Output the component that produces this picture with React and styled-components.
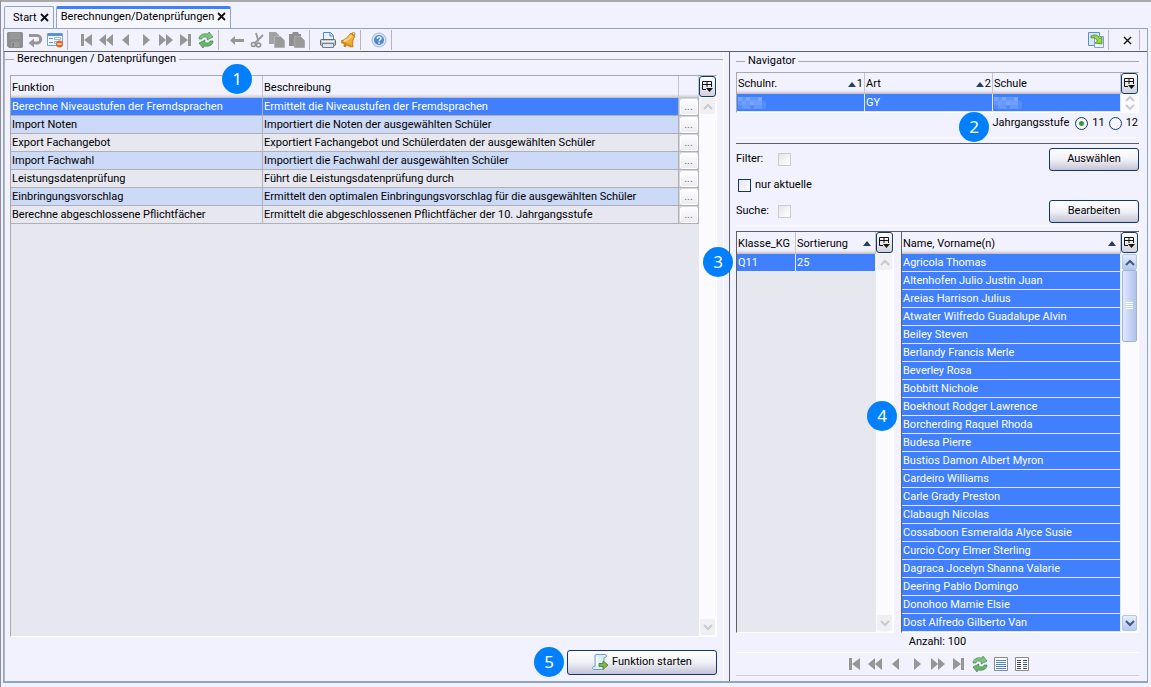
import React, { useState } from "react";
import styled, { createGlobalStyle } from "styled-components";

const functions = [
  ["Berechne Niveaustufen der Fremdsprachen", "Ermittelt die Niveaustufen der Fremdsprachen"],
  ["Import Noten", "Importiert die Noten der ausgewählten Schüler"],
  ["Export Fachangebot", "Exportiert Fachangebot und Schülerdaten der ausgewählten Schüler"],
  ["Import Fachwahl", "Importiert die Fachwahl der ausgewählten Schüler"],
  ["Leistungsdatenprüfung", "Führt die Leistungsdatenprüfung durch"],
  ["Einbringungsvorschlag", "Ermittelt den optimalen Einbringungsvorschlag für die ausgewählten Schüler"],
  ["Berechne abgeschlossene Pflichtfächer", "Ermittelt die abgeschlossenen Pflichtfächer der 10. Jahrgangsstufe"],
];

const students = [
  "Agricola Thomas",
  "Altenhofen Julio Justin Juan",
  "Areias Harrison Julius",
  "Atwater Wilfredo Guadalupe Alvin",
  "Beiley Steven",
  "Berlandy Francis Merle",
  "Beverley Rosa",
  "Bobbitt Nichole",
  "Boekhout Rodger Lawrence",
  "Borcherding Raquel Rhoda",
  "Budesa Pierre",
  "Bustios Damon Albert Myron",
  "Cardeiro Williams",
  "Carle Grady Preston",
  "Clabaugh Nicolas",
  "Cossaboon Esmeralda Alyce Susie",
  "Curcio Cory Elmer Sterling",
  "Dagraca Jocelyn Shanna Valarie",
  "Deering Pablo Domingo",
  "Donohoo Mamie Elsie",
  "Dost Alfredo Gilberto Van",
];

/* icons */

const navPaths = {
  Erster: "M3 2h3v12H3zM14 2v12L6 8z",
  Zurückblättern: "M8 2v12L1 8zM15 2v12L8 8z",
  Voriger: "M11 2v12L4 8z",
  Nächster: "M5 2v12l7-6z",
  Vorblättern: "M1 2v12l7-6zM8 2v12l7-6z",
  Letzter: "M2 2v12l8-6zM10 2h3v12h-3z",
};

const Icon = ({ children, size = 16 }) => (
  <svg width={size} height={size} viewBox="0 0 16 16" aria-hidden="true">
    {children}
  </svg>
);

const NavIcon = ({ name }) => (
  <Icon>
    <path d={navPaths[name]} fill="#969696" />
  </Icon>
);

const SaveIcon = () => (
  <Icon>
    <path d="M1 0h14l1 1v14l-1 1H2l-2-2V1z" fill="#8f8f8f" />
    <path d="M3 1h10v6H3z" fill="#9c9c9c" />
    <path d="M3 3h10M3 5h10" stroke="#949494" />
    <path d="M4 10h8v5H4z" fill="#9c9c9c" />
    <path d="M5 11h2v4H5z" fill="#858585" />
  </Icon>
);

const UndoIcon = () => (
  <Icon>
    <path d="M2 3.500h8a3.500 3.500 0 0 1 0 7.500H6" fill="none" stroke="#969696" strokeWidth="3" />
    <path d="M7 6.500v9L1.500 11z" fill="#969696" />
  </Icon>
);

const FormIcon = () => (
  <Icon>
    <path d="M.5 1.500h15v12H.5z" fill="#f4f8fe" stroke="#7ba0d3" />
    <path d="M1 1h14v3H1z" fill="#5e92d8" />
    <path d="M2 6.500h4M2 10.500h4" stroke="#6a9be0" />
    <path d="M7.500 5.500h6v2h-6zM7.500 9.500h3v2h-3z" fill="#fff" stroke="#9bb4d6" />
    <circle cx="12.500" cy="12" r="3.500" fill="#e8661b" />
    <path d="M10.500 12h4" stroke="#fff" strokeWidth="1.500" />
  </Icon>
);

const RefreshIcon = () => (
  <Icon>
    <path d="M1 7c0-4 4-6 9-5l1-2 4 5-6 3 .5-2.500C6 4.500 4 5 4 7z" fill="#7fc281" stroke="#3f8f48" strokeWidth=".7" />
    <path d="M15 9c0 4-4 6-9 5l-1 2-4-5 6-3-.5 2.500C10 11.500 12 11 12 9z" fill="#6ab56e" stroke="#3a8643" strokeWidth=".7" />
  </Icon>
);

const BackIcon = () => (
  <Icon>
    <path d="M6 4v3h9v3H6v3L1 8.500z" fill="#969696" />
  </Icon>
);

const CutIcon = () => (
  <Icon>
    <path d="M7 1l2.500 8.500M14 3L6 11" stroke="#999" strokeWidth="1.800" />
    <circle cx="4.500" cy="12.500" r="2" fill="none" stroke="#8f8f8f" strokeWidth="1.600" />
    <circle cx="9.500" cy="13" r="2" fill="none" stroke="#8f8f8f" strokeWidth="1.600" />
  </Icon>
);

const CopyIcon = () => (
  <Icon>
    <path d="M0 0h7l3 3v9H0z" fill="#a3a3a3" />
    <path d="M5.500 4.500h6l4 4v7h-10z" fill="#999" stroke="#b4b4b4" />
  </Icon>
);

const PasteIcon = () => (
  <Icon>
    <path d="M0 2h3l1-2h5l1 2h2v12H0z" fill="#8f8f8f" />
    <path d="M5.500 4.500h6l4 4v7h-10z" fill="#999" stroke="#aaa" />
  </Icon>
);

const PrintIcon = () => (
  <Icon>
    <path d="M3.500 8V.5h7l3 3V8z" fill="#e6f1fd" stroke="#4f87c9" />
    <path d="M10 1v3h3" fill="none" stroke="#4f87c9" />
    <rect x=".5" y="7.500" width="15" height="6" rx="1" fill="#c9c9cb" stroke="#66676b" />
    <path d="M2.500 11.500h11v4h-11z" fill="#dbeaf9" stroke="#6f7f93" />
    <path d="M2 9.500h12" stroke="#f4f4f4" />
  </Icon>
);

const BellIcon = () => (
  <Icon>
    <path d="M1 9C5 8 8 5 11 1l4 3c-2 3-3 6-2 11z" fill="#f2ad32" stroke="#c67c14" />
    <path d="M4 9c4-1 6-3 8-6" fill="none" stroke="#fbd98c" strokeWidth="2" />
    <path d="M1 9l12 6-2 .5L1 11z" fill="#d48a1c" />
    <circle cx="13.500" cy="2" r="1.500" fill="none" stroke="#c67c14" />
    <circle cx="5" cy="13.500" r="1.500" fill="#c67c14" />
  </Icon>
);

const HelpIcon = () => (
  <Icon>
    <circle cx="8" cy="8" r="7" fill="#d9e6f5" stroke="#9db9dc" />
    <circle cx="8" cy="8" r="5" fill="#5288c8" />
    <path d="M6.200 6.800c0-2.600 3.800-2.500 3.800-.3 0 1.400-1.900 1.200-1.900 2.800M8.100 10.300v1.400" fill="none" stroke="#fff" strokeWidth="1.400" />
  </Icon>
);

const ExportIcon = () => (
  <Icon>
    <path d="M.5.5h11v13H.5z" fill="#d5e9fb" stroke="#5d8fc7" />
    <path d="M6.500 4.500h9v11h-9z" fill="#f1f7fe" stroke="#7fa3cf" />
    <path d="M3 4c4-2 7-1 8.500 2.500L14 5v7l-7-1 2.500-2C8 6.500 6 5 3 6z" fill="#9bd63f" stroke="#3f8423" strokeWidth=".8" />
  </Icon>
);

const ScriptIcon = () => (
  <Icon>
    <path d="M4 .5h9c2 0 2 3 0 3h-1v9c0 2-1 3-3 3H2c-2 0-2-3 0-3h1V2c0-1 .4-1.500 1-1.500z" fill="#dcedfb" stroke="#6f9dcb" />
    <path d="M5 3v9" stroke="#fff" strokeWidth="2" />
    <path d="M7 9.500h4V7l5 4-5 4.500v-3H7z" fill="#7cb842" stroke="#3f7d22" strokeWidth=".8" />
  </Icon>
);

const ListIcon = ({ split }) => (
  <Icon>
    <path d="M1.500 1.500h13v13h-13z" fill="#fff" stroke="#8b8b8b" />
    <path d="M3 4.500h10M3 6.500h10M3 8.500h10M3 10.500h10M3 12.500h10" stroke="#4b87cf" />
    {split && <path d="M3 4.500h4M3 6.500h4M3 8.500h4M3 10.500h4M3 12.500h4M9 4.500h4M9 8.500h4M9 12.500h4" stroke="#444" />}
    {split && <path d="M8 2v12" stroke="#fff" strokeWidth="2" />}
  </Icon>
);

const ColumnsIcon = () => (
  <svg width="11" height="12" viewBox="0 0 11 12" aria-hidden="true">
    <path d="M4 8.500H.5v-8h9V6M.5 3.500h9M5 0v6" fill="none" stroke="#111" />
    <path d="M4 7h7l-3.500 4z" fill="#111" />
  </svg>
);

const Chevron = ({ down, off }) => (
  <svg width="10" height="7" viewBox="0 0 10 7" aria-hidden="true">
    <path d={down ? "M1 1l4 4 4-4" : "M1 6l4-4 4 4"} fill="none" stroke={off ? "#c9c9d0" : "#43597b"} strokeWidth="2" />
  </svg>
);

const SortArrow = () => (
  <svg width="8" height="5" viewBox="0 0 8 5" aria-hidden="true">
    <path d="M0 5l4-5 4 5z" fill="#24405f" />
  </svg>
);

const CloseIcon = ({ thin }) => (
  <svg width="9" height="9" viewBox="0 0 9 9" aria-hidden="true">
    <path d="M1 1l7 7M8 1L1 8" stroke="#111" strokeWidth={thin ? 1.4 : 1.8} />
  </svg>
);

// anonymised value, drawn as a small mosaic
const Mosaic = () => (
  <svg width="28" height="12" viewBox="0 0 28 12" role="img" aria-label="anonymisiert">
    <path d="M0 0h24v12H0z" fill="#6398ff" />
    <path d="M0 0h4v4H0zM12 4h4v4h-4zM20 0h4v4h-4zM8 0h4v4H8z" fill="#79a7ff" />
    <path d="M4 4h4v4H4zM16 4h8v4h-8z" fill="#6fa0ff" />
    <path d="M0 8h4v4H0zM24 4h4v8h-4zM12 8h4v4h-4z" fill="#528cff" />
  </svg>
);

/* building blocks */

const ScrollArea = ({ disabled, thumb, label }) => (
  <ScrollTrack>
    <ScrollButton type="button" aria-label={`${label} nach oben`} disabled={disabled}>
      <Chevron off={disabled} />
    </ScrollButton>
    {thumb && <ScrollThumb />}
    <ScrollSpace />
    <ScrollButton type="button" aria-label={`${label} nach unten`} disabled={disabled}>
      <Chevron down off={disabled} />
    </ScrollButton>
  </ScrollTrack>
);

const ColumnsButton = () => (
  <CornerButton type="button" aria-label="Spalten auswählen">
    <ColumnsIcon />
  </CornerButton>
);

const NavButtons = () =>
  Object.keys(navPaths).map((name) => (
    <IconButton key={name} type="button" aria-label={name}>
      <NavIcon name={name} />
    </IconButton>
  ));

const App = () => {
  const [grade, setGrade] = useState("11");

  return (
    <>
      <GlobalStyle />
      <Window>
        <Tabs>
          <Tab>
            <TabLink href="#start">Start</TabLink>
            <CloseButton type="button" aria-label="Start schließen">
              <CloseIcon />
            </CloseButton>
          </Tab>
          <Tab $active>
            <TabLink href="#berechnungen">Berechnungen/Datenprüfungen</TabLink>
            <CloseButton type="button" aria-label="Berechnungen schließen">
              <CloseIcon />
            </CloseButton>
          </Tab>
        </Tabs>

        <Page>
          <Toolbar>
            <ToolGroup $first>
              <IconButton type="button" aria-label="Speichern"><SaveIcon /></IconButton>
              <IconButton type="button" aria-label="Rückgängig"><UndoIcon /></IconButton>
              <IconButton type="button" aria-label="Formular"><FormIcon /></IconButton>
            </ToolGroup>
            <ToolGroup>
              <NavButtons />
              <IconButton type="button" aria-label="Aktualisieren"><RefreshIcon /></IconButton>
            </ToolGroup>
            <ToolGroup>
              <IconButton type="button" aria-label="Zurück"><BackIcon /></IconButton>
              <IconButton type="button" aria-label="Ausschneiden"><CutIcon /></IconButton>
              <IconButton type="button" aria-label="Kopieren"><CopyIcon /></IconButton>
              <IconButton type="button" aria-label="Einfügen"><PasteIcon /></IconButton>
            </ToolGroup>
            <ToolGroup>
              <IconButton type="button" aria-label="Drucken"><PrintIcon /></IconButton>
              <IconButton type="button" aria-label="Erinnerung"><BellIcon /></IconButton>
            </ToolGroup>
            <ToolGroup>
              <IconButton type="button" aria-label="Hilfe"><HelpIcon /></IconButton>
            </ToolGroup>
            <ToolEnd>
              <ToolGroup $first>
                <IconButton type="button" aria-label="Exportieren"><ExportIcon /></IconButton>
              </ToolGroup>
              <ToolGroup>
                <IconButton type="button" aria-label="Schließen"><CloseIcon thin /></IconButton>
              </ToolGroup>
            </ToolEnd>
          </Toolbar>

          <Columns>
            <Main>
              <MainLegend>Berechnungen / Datenprüfungen</MainLegend>
              <MainTable>
                <Badge $x={211} $y={-12}>1</Badge>
                <TableSide>
                  <Table $head={22}>
                    <colgroup>
                      <col width="252" />
                      <col />
                      <col width="20" />
                    </colgroup>
                    <thead>
                      <tr>
                        <Th>Funktion</Th>
                        <Th>Beschreibung</Th>
                        <Th aria-label="Aktion" />
                      </tr>
                    </thead>
                    <tbody>
                      {functions.map(([name, text], i) => (
                        <Row key={name} $selected={i === 0} $striped={i % 2 === 1}>
                          <Td>{name}</Td>
                          <Td>{text}</Td>
                          <ButtonCell>
                            <MoreButton type="button" aria-label={`${name} öffnen`}>...</MoreButton>
                          </ButtonCell>
                        </Row>
                      ))}
                    </tbody>
                  </Table>
                </TableSide>
                <ScrollSide>
                  <ColumnsButton />
                  <ScrollArea disabled label="Funktionen" />
                </ScrollSide>
              </MainTable>
              <Footer>
                <Badge $inline>5</Badge>
                <Button type="button" $large>
                  <ScriptIcon />
                  Funktion starten
                </Button>
              </Footer>
            </Main>

            <Navigator>
              <Legend>Navigator</Legend>
              <SchoolTable>
                <TableSide>
                  <Table $head={21}>
                    <colgroup>
                      <col width="128" />
                      <col width="128" />
                      <col />
                    </colgroup>
                    <thead>
                      <tr>
                        <Th><Head>Schulnr.<Sort><SortArrow />1</Sort></Head></Th>
                        <Th><Head>Art<Sort><SortArrow />2</Sort></Head></Th>
                        <Th>Schule</Th>
                      </tr>
                    </thead>
                    <tbody>
                      <Row $selected $light>
                        <Td><Mosaic /></Td>
                        <Td>GY</Td>
                        <Td><Mosaic /></Td>
                      </Row>
                    </tbody>
                  </Table>
                </TableSide>
                <ScrollSide>
                  <ColumnsButton />
                  <Spinner>
                    <Chevron off />
                    <Chevron down off />
                  </Spinner>
                </ScrollSide>
              </SchoolTable>

              <GradeRow role="radiogroup" aria-label="Jahrgangsstufe">
                <Badge $x={223} $y={-1}>2</Badge>
                <GradeLabel>Jahrgangsstufe</GradeLabel>
                {["11", "12"].map((g) => (
                  <RadioLabel key={g}>
                    <Radio name="grade" checked={grade === g} onChange={() => setGrade(g)} />
                    {g}
                  </RadioLabel>
                ))}
              </GradeRow>

              <Filters>
                <FilterRow>
                  <FilterLabel htmlFor="filter">Filter:</FilterLabel>
                  <Check id="filter" disabled />
                  <Button type="button">Auswählen</Button>
                </FilterRow>
                <FilterRow $indent>
                  <Check id="current" />
                  <label htmlFor="current">nur aktuelle</label>
                </FilterRow>
                <FilterRow>
                  <FilterLabel htmlFor="search">Suche:</FilterLabel>
                  <Check id="search" disabled />
                  <Button type="button">Bearbeiten</Button>
                </FilterRow>
              </Filters>

              <Lists>
                <ClassTable>
                  <Badge $x={-34} $y={15}>3</Badge>
                  <TableSide>
                    <Table $head={22}>
                      <colgroup>
                        <col width="59" />
                        <col />
                      </colgroup>
                      <thead>
                        <tr>
                          <Th>Klasse_KG</Th>
                          <Th><Head>Sortierung<Sort $pad><SortArrow /></Sort></Head></Th>
                        </tr>
                      </thead>
                      <tbody>
                        <Row $selected $light>
                          <Td>Q11</Td>
                          <Td>25</Td>
                        </Row>
                      </tbody>
                    </Table>
                  </TableSide>
                  <ScrollSide>
                    <ColumnsButton />
                    <ScrollArea disabled label="Klassen" />
                  </ScrollSide>
                </ClassTable>
                <NameTable>
                  <Badge $x={-35} $y={169}>4</Badge>
                  <TableSide>
                    <Table $head={22}>
                      <thead>
                        <tr>
                          <Th><Head>Name, Vorname(n)<Sort $pad><SortArrow /></Sort></Head></Th>
                        </tr>
                      </thead>
                      <tbody>
                        {students.map((s) => (
                          <Row key={s} $selected $light>
                            <Td>{s}</Td>
                          </Row>
                        ))}
                      </tbody>
                    </Table>
                  </TableSide>
                  <ScrollSide>
                    <ColumnsButton />
                    <ScrollArea thumb label="Schüler" />
                  </ScrollSide>
                </NameTable>
              </Lists>

              <Count>Anzahl: 100</Count>
              <Pager>
                <NavButtons />
                <IconButton type="button" aria-label="Neu laden"><RefreshIcon /></IconButton>
                <IconButton type="button" aria-label="Liste"><ListIcon /></IconButton>
                <IconButton type="button" aria-label="Detailliste"><ListIcon split /></IconButton>
              </Pager>
            </Navigator>
          </Columns>
        </Page>
      </Window>
    </>
  );
};

const GlobalStyle = createGlobalStyle`
  * {
    box-sizing: border-box;
  }
  body {
    margin: 0;
    background: #f2f2ff;
    color: #000;
    font: 11px/16px Roboto, sans-serif;
  }
  button, input {
    font: inherit;
    color: inherit;
    margin: 0;
  }
  svg {
    display: block;
    flex: none;
  }
`;

const Window = styled.div`
  display: flex;
  flex-direction: column;
  min-height: 100vh;
  padding: 4px 3px 4px 2px;
  border-top: 2px solid #a9a9ac;
  border-left: 1px solid #8e8e96;
  border-bottom: 1px solid #7a9cc4;
`;

const Tabs = styled.nav`
  display: flex;
  gap: 2px;
  padding-left: 1px;
`;

const Tab = styled.div`
  display: flex;
  align-items: center;
  gap: 3px;
  height: 22px;
  padding: ${(p) => (p.$active ? "0 4px 3px" : "1px 4px 0 8px")};
  border: 1px solid #8fa5c0;
  border-bottom: 0;
  border-top: ${(p) => (p.$active ? "3px solid #3f7ffb" : "1px solid #8fa5c0")};
  border-radius: 2px 2px 0 0;
  background: ${(p) => (p.$active ? "#f7f7ff" : "#f2f2ff")};
`;

const TabLink = styled.a`
  color: inherit;
  text-decoration: none;
`;

const CloseButton = styled.button`
  padding: 0 0 2px;
  border: 0;
  background: none;
`;

const Page = styled.div`
  display: flex;
  flex: 1;
  flex-direction: column;
  border: 1px solid #8fa5c0;
  border-bottom: 2px solid #8fa5c0;
`;

const Toolbar = styled.div`
  display: flex;
  height: 23px;
  border-bottom: 1px solid #5f5f66;
`;

const ToolGroup = styled.div`
  display: flex;
  align-items: center;
  gap: 4px;
  margin: 1px 0;
  padding: ${(p) => (p.$first ? "0 4px 0 3px" : "0 4px 0 10px")};
  border-right: 1px solid #b5b5b8;
`;

const ToolEnd = styled.div`
  display: flex;
  margin-left: auto;
  padding-right: 7px;
`;

const IconButton = styled.button`
  display: grid;
  place-items: center;
  width: 16px;
  height: 16px;
  padding: 0;
  border: 0;
  background: none;
`;

const Columns = styled.div`
  display: grid;
  flex: 1;
  grid-template-columns: minmax(0, 1fr) 418px;
  gap: 5px;
`;

const Main = styled.section`
  display: flex;
  flex-direction: column;
  padding: 0 6px 4px 5px;
  border-left: 1px solid #b5b5b8;
  border-right: 1px solid #fff;
`;

const Legend = styled.h2`
  display: flex;
  align-items: center;
  gap: 3px;
  margin: 0;
  font-size: 11px;
  font-weight: normal;
  line-height: 14px;
  &::before,
  &::after {
    content: "";
    height: 1px;
    background: #a9a9ac;
  }
  &::before {
    width: 9px;
  }
  &::after {
    flex: 1;
  }
`;

const MainLegend = styled(Legend)`
  margin: 0 -6px 0 -5px;
`;

const Frame = styled.div`
  position: relative;
  display: flex;
  border: 1px solid #a9a9ac;
  border-right-color: #fff;
  border-bottom-color: #fff;
`;

const MainTable = styled(Frame)`
  flex: 1;
  margin-top: 9px;
`;

const SchoolTable = styled(Frame)`
  margin-top: 4px;
`;

const ClassTable = styled(Frame)`
  width: 158px;
  border-left-color: #5f5f66;
  border-top: 0;
`;

const NameTable = styled(Frame)`
  flex: 1;
  border-left-color: #5f5f66;
  border-top: 0;
`;

const TableSide = styled.div`
  flex: 1;
  min-width: 0;
  background: #e7e7ef;
`;

const ScrollSide = styled.div`
  display: flex;
  flex-direction: column;
  width: 17px;
  background: #fbfbff;
`;

const Table = styled.table`
  width: 100%;
  table-layout: fixed;
  border-collapse: separate;
  border-spacing: 0;
  th {
    height: ${(p) => p.$head}px;
  }
`;

const Th = styled.th`
  padding: 2px 1px 0;
  overflow: hidden;
  border-right: 1px solid #c4c4ca;
  border-bottom: 1px solid #c0c0c8;
  background: linear-gradient(#f2f2ff 85%, #d2d2dc);
  font-weight: normal;
  text-align: left;
  white-space: nowrap;
`;

const Head = styled.span`
  display: flex;
  justify-content: space-between;
`;

const Sort = styled.span`
  display: flex;
  align-items: center;
  gap: 1px;
  padding-right: ${(p) => (p.$pad ? 3 : 0)}px;
`;

const Td = styled.td`
  height: 18px;
  padding: 1px 1px 0;
  overflow: hidden;
  line-height: 16px;
  white-space: nowrap;
`;

const Row = styled.tr`
  background: ${(p) => (p.$selected ? "#4080ff" : p.$striped ? "#ccdaf7" : "#e7e7ef")};
  color: ${(p) => (p.$selected ? "#fff" : "#000")};
  td {
    border-right: 1px solid ${(p) => (p.$light ? "#e7e7ef" : "#b0b0b6")};
    border-bottom: 1px solid ${(p) => (p.$light ? "#e7e7ef" : "#b0b0b6")};
  }
`;

const ButtonCell = styled(Td)`
  padding: 0;
  background: #d4d4dc;
`;

const MoreButton = styled.button`
  display: block;
  width: 18px;
  height: 16px;
  margin: 0 auto;
  padding: 0;
  border: 1px solid #fff;
  border-radius: 2px;
  background: linear-gradient(#fdfdff, #ececf2);
  color: #6d7a6d;
  font-size: 11px;
  line-height: 13px;
`;

const CornerButton = styled.button`
  display: grid;
  place-items: center;
  width: 17px;
  height: 21px;
  padding: 0;
  border: 1px solid #12376d;
  border-radius: 3px;
  background: linear-gradient(#fff, #d2d2de);
`;

const ScrollTrack = styled.div`
  display: flex;
  flex: 1;
  flex-direction: column;
  align-items: center;
  padding: 1px 0;
`;

const ScrollButton = styled.button`
  display: grid;
  place-items: center;
  width: 15px;
  height: 16px;
  padding: 0;
  border: ${(p) => (p.disabled ? "0" : "1px solid #b4c4e4")};
  border-radius: 2px;
  background: ${(p) => (p.disabled ? "#f0f0f4" : "linear-gradient(#e6eeff, #b4c8f0)")};
`;

const ScrollThumb = styled.div`
  width: 15px;
  height: 72px;
  border: 1px solid #9fb2d8;
  border-radius: 2px;
  background:
    repeating-linear-gradient(#fff 0 1px, transparent 1px 2px) center / 7px 8px no-repeat,
    linear-gradient(90deg, #dfe8ff, #b0c2ec);
`;

const ScrollSpace = styled.div`
  flex: 1;
`;

const Spinner = styled.div`
  display: flex;
  flex: 1;
  flex-direction: column;
  align-items: center;
  justify-content: space-evenly;
`;

const Badge = styled.span`
  display: grid;
  place-items: center;
  width: 30px;
  height: 30px;
  border-radius: 50%;
  background: #0080ff;
  color: #fff;
  font: 17px/30px "Noto Sans", sans-serif;
  ${(p) => !p.$inline && `position: absolute; z-index: 1; left: ${p.$x}px; top: ${p.$y}px;`}
`;

const Footer = styled.footer`
  display: flex;
  align-items: center;
  justify-content: flex-end;
  gap: 3px;
  margin-top: 10px;
`;

const Button = styled.button`
  display: flex;
  align-items: center;
  justify-content: center;
  gap: 4px;
  width: ${(p) => (p.$large ? 150 : 90)}px;
  height: ${(p) => (p.$large ? 25 : 23)}px;
  margin-left: auto;
  padding: 0;
  border: 1px solid #12376d;
  border-radius: 3px;
  background: linear-gradient(#fff, #f0f0f8 50%, #c4c4d4);
  ${Footer} & {
    margin-left: 0;
  }
`;

const Navigator = styled.aside`
  display: flex;
  flex-direction: column;
  padding: 2px 8px 5px 6px;
  border-left: 1px solid #5f5f66;
`;

const GradeRow = styled.div`
  position: relative;
  display: flex;
  align-items: center;
  justify-content: flex-end;
  gap: 4px;
  height: 25px;
  padding: 0 1px 4px 0;
  border-bottom: 1px solid #fff;
`;

const GradeLabel = styled.span`
  margin-right: 2px;
`;

const RadioLabel = styled.label`
  display: flex;
  align-items: center;
  gap: 4px;
`;

const Radio = styled.input.attrs({ type: "radio" })`
  appearance: none;
  width: 13px;
  height: 13px;
  border: 1px solid #12376d;
  border-radius: 50%;
  background: #f7f7fa;
  &:checked {
    background: radial-gradient(circle, #2f9a2f 0 2px, #f7f7fa 3px);
  }
`;

const Filters = styled.div`
  margin-top: 5px;
  padding: 2px 0 1px;
  border-top: 1px solid #5f5f66;
  border-bottom: 1px solid #fff;
`;

const FilterRow = styled.div`
  display: flex;
  align-items: center;
  gap: 4px;
  height: 26px;
  padding-left: ${(p) => (p.$indent ? 2 : 0)}px;
`;

const FilterLabel = styled.label`
  width: 38px;
`;

const Check = styled.input.attrs({ type: "checkbox" })`
  appearance: none;
  width: 13px;
  height: 13px;
  border: 1px solid ${(p) => (p.disabled ? "#cbcbd2" : "#12376d")};
  background: linear-gradient(135deg, #e6e6ea, #fff);
`;

const Lists = styled.div`
  display: flex;
  flex: 1;
  gap: 7px;
  margin-top: 5px;
  border-top: 1px solid #5f5f66;
`;

const Count = styled.p`
  margin: 0;
  padding: 1px 0 2px;
  border-bottom: 1px solid #fff;
  text-align: center;
`;

const Pager = styled.div`
  display: flex;
  align-items: center;
  justify-content: center;
  gap: 5px;
  height: 23px;
  border-bottom: 1px solid #cfcfd8;
`;

export default App;
